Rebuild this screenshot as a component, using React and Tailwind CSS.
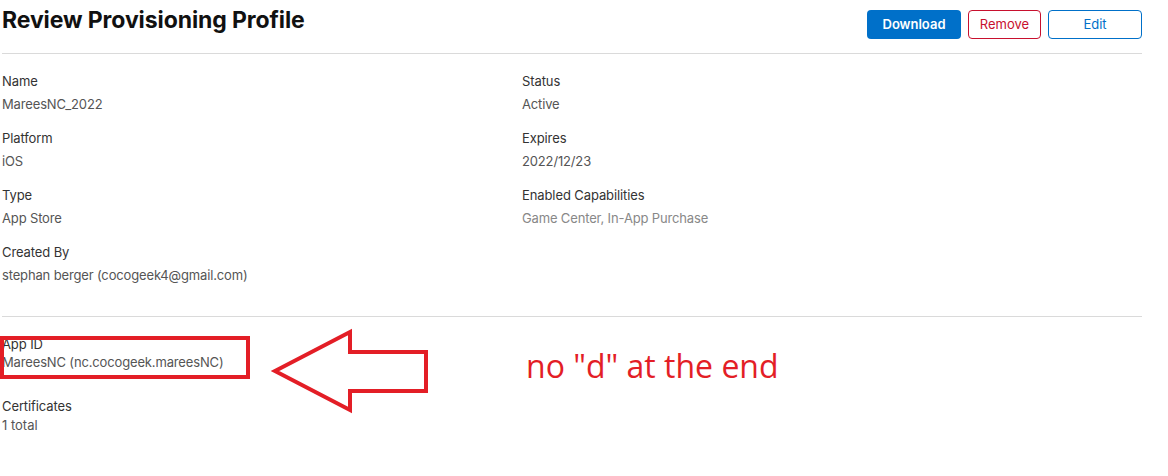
import React from 'react';

const left = [
  { label: 'Name', value: 'MareesNC_2022' },
  { label: 'Platform', value: 'iOS' },
  { label: 'Type', value: 'App Store' },
  { label: 'Created By', value: 'stephan berger (cocogeek4@gmail.com)' },
];

const right = [
  { label: 'Status', value: 'Active' },
  { label: 'Expires', value: '2022/12/23' },
  { label: 'Enabled Capabilities', value: 'Game Center, In-App Purchase', muted: true },
];

function Field({ label, value, muted }) {
  return (
    <div>
      <div className="text-[13px] leading-[18px] text-[#333] tracking-[-0.1px]">{label}</div>
      <div className={`mt-[5px] text-[13px] leading-[18px] tracking-[-0.15px] ${muted ? 'text-[#888]' : 'text-[#555]'}`}>{value}</div>
    </div>
  );
}

export default function App() {
  return (
    <div className="relative w-[1168px] h-[476px] bg-white overflow-hidden font-['Inter',sans-serif]">
      <div className="ml-[2px] w-[1140px]">
        {/* Header */}
        <div className="flex justify-between items-start pt-[9px] h-[54px] border-b border-[#dadada]">
          <h1 className="text-[23px] leading-[23px] font-bold text-[#111] tracking-[-0.1px]">Review Provisioning Profile</h1>
          <div className="flex gap-[7px] pt-px">
            <button className="w-[94px] h-[29px] rounded-[4px] bg-[#0070c9] text-white text-[13px] font-semibold">Download</button>
            <button className="w-[73px] h-[29px] rounded-[4px] border border-[#c8102e] text-[#c8102e] text-[13px]">Remove</button>
            <button className="w-[94px] h-[29px] rounded-[4px] border border-[#0070c9] text-[#0070c9] text-[13px]">Edit</button>
          </div>
        </div>

        {/* Details */}
        <div className="grid grid-cols-[520px_1fr] pt-[18px] pb-[32px] border-b border-[#dadada]">
          <div className="flex flex-col gap-[16px]">
            {left.map((f) => <Field key={f.label} {...f} />)}
          </div>
          <div className="flex flex-col gap-[16px]">
            {right.map((f) => <Field key={f.label} {...f} />)}
          </div>
        </div>

        {/* App ID / certificates */}
        <div className="pt-[18px]">
          <div className="text-[13px] leading-[18px] text-[#333] tracking-[-0.1px]">App ID</div>
          <div className="text-[13px] leading-[18px] text-[#555] tracking-[-0.15px]">MareesNC (nc.cocogeek.mareesNC)</div>
          <div className="mt-[26px] text-[13px] leading-[18px] text-[#333] tracking-[-0.1px]">Certificates</div>
          <div className="mt-px text-[13px] leading-[18px] text-[#555]">1 total</div>
        </div>
      </div>

      {/* Annotation overlay */}
      <div className="absolute left-0 top-[336px] w-[250px] h-[43px] border-[4px] border-[#e31e26]" />
      <svg className="absolute left-0 top-0" width="1168" height="476" viewBox="0 0 1168 476">
        <polygon
          points="275,371 350,332 350,352 426,352 426,391 350,391 350,410"
          fill="none"
          stroke="#e31e26"
          strokeWidth="4"
          strokeLinejoin="miter"
        />
      </svg>
      <div className="absolute left-[526px] top-[344px] text-[32px] leading-[44px] text-[#e31e26] font-['Open_Sans',sans-serif]">
        no "d" at the end
      </div>
    </div>
  );
}
